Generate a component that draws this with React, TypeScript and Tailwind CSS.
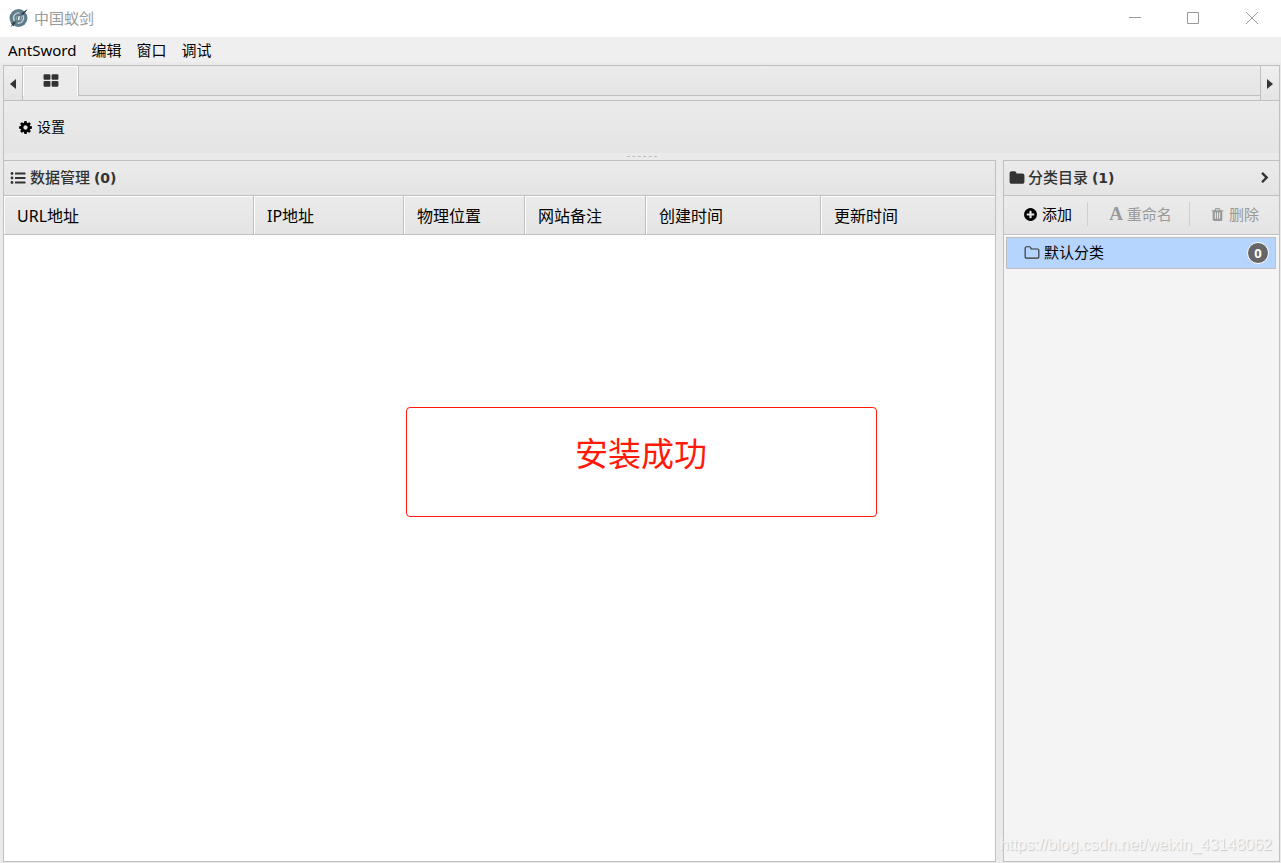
import React from "react";

type IconProps = { className?: string };

function Glyph({ d, className = "" }: { d: string; className?: string }) {
  return (
    <svg viewBox="0 0 1792 1792" fill="currentColor" aria-hidden="true" className={`shrink-0 ${className}`}>
      <path d={d} />
    </svg>
  );
}

const GRID =
  "M832 1024v384q0 52-38 90t-90 38h-512q-52 0-90-38t-38-90v-384q0-52 38-90t90-38h512q52 0 90 38t38 90zm0-768v384q0 52-38 90t-90 38h-512q-52 0-90-38t-38-90v-384q0-52 38-90t90-38h512q52 0 90 38t38 90zm896 768v384q0 52-38 90t-90 38h-512q-52 0-90-38t-38-90v-384q0-52 38-90t90-38h512q52 0 90 38t38 90zm0-768v384q0 52-38 90t-90 38h-512q-52 0-90-38t-38-90v-384q0-52 38-90t90-38h512q52 0 90 38t38 90z";
const COG =
  "M1152 896q0-106-75-181t-181-75-181 75-75 181 75 181 181 75 181-75 75-181zm512-109v222q0 12-8 23t-20 13l-185 28q-19 54-39 91 35 50 107 138 10 12 10 25t-9 23q-27 37-99 108t-94 71q-12 0-26-9l-138-108q-44 23-91 38-16 136-29 186-7 28-36 28h-222q-14 0-24.5-8.5t-11.5-21.5l-28-184q-49-16-90-37l-141 107q-10 9-25 9-14 0-25-11-126-114-165-168-7-10-7-23 0-12 8-23 15-21 51-66.5t54-70.5q-27-50-41-99l-183-27q-13-2-21-12.5t-8-23.5v-222q0-12 8-23t19-13l186-28q14-46 39-92-40-57-107-138-10-12-10-24 0-10 9-23 26-36 98.5-107.5t94.5-71.5q13 0 26 10l138 107q44-23 91-38 16-136 29-186 7-28 36-28h222q14 0 24.5 8.5t11.5 21.5l28 184q49 16 90 37l142-107q9-9 24-9 13 0 25 10 129 119 165 170 7 8 7 22 0 12-8 23-15 21-51 66.5t-54 70.5q26 50 41 98l183 28q13 2 21 12.5t8 23.5z";
const FOLDER_OPEN =
  "M1600 1312v-704q0-40-28-68t-68-28h-704q-40 0-68-28t-28-68v-64q0-40-28-68t-68-28h-320q-40 0-68 28t-28 68v960q0 40 28 68t68 28h1216q40 0 68-28t28-68zm128-704v704q0 92-66 158t-158 66h-1216q-92 0-158-66t-66-158v-960q0-92 66-158t158-66h320q92 0 158 66t66 158v32h672q92 0 158 66t66 158z";
const FOLDER =
  "M1728 608v704q0 92-66 158t-158 66h-1216q-92 0-158-66t-66-158v-960q0-92 66-158t158-66h320q92 0 158 66t66 158v32h672q92 0 158 66t66 158z";
const TRASH =
  "M704 1376v-704q0-14-9-23t-23-9h-64q-14 0-23 9t-9 23v704q0 14 9 23t23 9h64q14 0 23-9t9-23zm256 0v-704q0-14-9-23t-23-9h-64q-14 0-23 9t-9 23v704q0 14 9 23t23 9h64q14 0 23-9t9-23zm256 0v-704q0-14-9-23t-23-9h-64q-14 0-23 9t-9 23v704q0 14 9 23t23 9h64q14 0 23-9t9-23zm-544-992h448l-48-117q-7-9-17-11h-317q-10 2-17 11zm928 32v64q0 14-9 23t-23 9h-96v948q0 83-47 143.5t-113 60.5h-832q-66 0-113-58.5t-47-141.5v-952h-96q-14 0-23-9t-9-23v-64q0-14 9-23t23-9h309l70-167q15-37 54-63t79-26h320q40 0 79 26t54 63l70 167h309q14 0 23 9t9 23z";
const PLUS_CIRCLE =
  "M1344 960v-128q0-26-19-45t-45-19h-256v-256q0-26-19-45t-45-19h-128q-26 0-45 19t-19 45v256h-256q-26 0-45 19t-19 45v128q0 26 19 45t45 19h256v256q0 26 19 45t45 19h128q26 0 45-19t19-45v-256h256q26 0 45-19t19-45zm320-64q0 209-103 385.5t-279.5 279.5-385.5 103-385.5-103-279.5-279.5-103-385.5 103-385.5 279.5-279.5 385.5-103 385.5 103 279.5 279.5 103 385.5z";
const CHEVRON =
  "M1363 877l-742 742q-19 19-45 19t-45-19l-166-166q-19-19-19-45t19-45l531-531-531-531q-19-19-19-45t19-45l166-166q19-19 45-19t45 19l742 742q19 19 19 45t-19 45z";

function ListIcon({ className = "" }: IconProps) {
  return (
    <svg viewBox="0 0 16 16" fill="currentColor" aria-hidden="true" className={`shrink-0 ${className}`}>
      <circle cx="2" cy="3.5" r="1.4" />
      <circle cx="2" cy="8" r="1.4" />
      <circle cx="2" cy="12.5" r="1.4" />
      <rect x="5" y="2.5" width="10.5" height="2" rx="0.3" />
      <rect x="5" y="7" width="10.5" height="2" rx="0.3" />
      <rect x="5" y="11.5" width="10.5" height="2" rx="0.3" />
    </svg>
  );
}

function RenameIcon({ className = "" }: IconProps) {
  return (
    <span aria-hidden="true" className={`shrink-0 font-['Liberation_Serif',serif] font-bold ${className}`}>
      A
    </span>
  );
}

function Logo({ className = "" }: IconProps) {
  return (
    <svg viewBox="0 0 20 20" fill="none" aria-hidden="true" className={`shrink-0 ${className}`}>
      <circle cx="9.5" cy="10" r="9" fill="#607d8b" />
      <path d="M5.6 13.2A5.2 5.2 0 0 1 10.5 4.9M13.6 7.2a5.2 5.2 0 0 1-5 8" stroke="#c3d0d6" strokeWidth="1.3" />
      <path d="M9.3 8.4l1.6-.5-.5 4-1.5.4z" fill="#f4f7f8" />
      <path d="M7.6 12.2a3 3 0 0 1 .5-4M12 8.2a3 3 0 0 1-.4 4" stroke="#a9bac2" strokeWidth=".8" />
      <path d="M1.4 19.2L5 13.6l1.6 1.5zM18.8.8l-6.6 5 1.5 1.4z" fill="#263238" />
      <path d="M3 16.8l4-4M12.5 7.4l5-5.2" stroke="#37474f" strokeWidth="1" />
      <path d="M2.2 15l2.8 2.8" stroke="#263238" strokeWidth="1" />
    </svg>
  );
}

const menus = ["AntSword", "编辑", "窗口", "调试"];
const columns = [
  { label: "URL地址", width: "w-[250px]" },
  { label: "IP地址", width: "w-[150px]" },
  { label: "物理位置", width: "w-[121px]" },
  { label: "网站备注", width: "w-[121px]" },
  { label: "创建时间", width: "w-[175px]" },
  { label: "更新时间", width: "" },
];

const shade = "bg-linear-to-b from-[#ebebeb] to-[#e4e4e4]";

function PanelTitle({ text, count }: { text: string; count: number }) {
  return (
    <h2 className="flex-1 pb-0.5 font-medium">
      {text}{" "}
      <span className="font-['DejaVu_Sans',sans-serif] text-sm font-bold">({count})</span>
    </h2>
  );
}

export default function App() {
  return (
    <div className="relative flex h-screen flex-col overflow-hidden bg-[#eaeaea] font-['Noto_Sans','Noto_Sans_CJK_SC',sans-serif] text-[15px] leading-5 text-black">
      <header className="flex h-[37px] shrink-0 items-center bg-white pb-px text-[#999]">
        <Logo className="ml-[9px] size-5" />
        <h1 className="ml-[5px] flex-1">中国蚁剑</h1>
        <button aria-label="最小化" className="flex h-full w-[58px] items-center justify-center">
          <svg viewBox="0 0 12 12" className="size-3" stroke="currentColor">
            <path d="M0 5.5h12" />
          </svg>
        </button>
        <button aria-label="最大化" className="flex h-full w-[58px] items-center justify-center">
          <svg viewBox="0 0 12 12" className="size-3" stroke="currentColor" fill="none">
            <path d="M.5.5h11v11H.5z" />
          </svg>
        </button>
        <button aria-label="关闭" className="flex h-full w-[59px] items-center justify-center">
          <svg viewBox="0 0 12 12" className="size-3" stroke="currentColor">
            <path d="M0 0l12 12M12 0L0 12" />
          </svg>
        </button>
      </header>

      <nav className="mb-[3px] flex h-[25px] shrink-0 items-center gap-[15px] bg-[#efefef] px-2">
        {menus.map((m) => (
          <button key={m}>{m}</button>
        ))}
      </nav>

      <div className="mr-px ml-[3px] flex h-[35px] shrink-0 border border-b-0 border-[#c0c0c0]">
        <button
          aria-label="向左滚动"
          className="flex w-[19px] items-center justify-center border-r border-[#c0c0c0] bg-linear-to-b from-[#efefef] to-[#e4e4e4] pt-0.5 text-[#333]"
        >
          <svg viewBox="0 0 6 10" className="h-2.5 w-1.5" fill="currentColor">
            <path d="M6 0v10L0 5z" />
          </svg>
        </button>
        <div role="tablist" className="flex h-[30px] flex-1">
          <button
            role="tab"
            aria-selected="true"
            aria-label="主页"
            className="flex w-[55px] items-center justify-center border border-b-0 border-white bg-[#ebebeb] pb-0.5 text-[#333]"
          >
            <Glyph d={GRID} className="size-4" />
          </button>
          <div className={`flex-1 border-b border-l border-[#c0c0c0] ${shade}`} />
        </div>
        <button
          aria-label="向右滚动"
          className="flex w-[19px] items-center justify-center border-l border-[#c0c0c0] bg-linear-to-b from-[#efefef] to-[#e4e4e4] pt-0.5 text-[#333]"
        >
          <svg viewBox="0 0 6 10" className="h-2.5 w-1.5" fill="currentColor">
            <path d="M0 0v10l6-5z" />
          </svg>
        </button>
      </div>

      <div className={`mr-px ml-[3px] flex h-[53px] shrink-0 items-center border-x border-t border-[#c0c0c0] px-3.5 ${shade}`}>
        <button className="flex items-center gap-1 text-sm">
          <Glyph d={COG} className="size-[15px]" />
          设置
        </button>
      </div>

      <div className="mr-px ml-[3px] flex h-[7px] shrink-0 items-center justify-center border-x border-[#c0c0c0]">
        <span className="w-[30px] border-t border-dashed border-[#bdbdbd]" />
      </div>

      <main className="mr-px mb-px ml-[3px] flex min-h-0 flex-1 gap-[7px]">
        <section className="flex min-w-0 flex-1 flex-col border border-[#c0c0c0] bg-white">
          <div className={`flex h-[35px] shrink-0 items-center gap-1 border-b border-[#c0c0c0] px-1.5 text-[#333] ${shade}`}>
            <ListIcon className="size-4" />
            <PanelTitle text="数据管理" count={0} />
          </div>
          <table className="w-full table-fixed border-separate border-spacing-0 text-base">
            <thead>
              <tr>
                {columns.map((c) => (
                  <th
                    key={c.label}
                    className={`h-[39px] border-r border-b border-r-[#c0c0c0] border-b-[#c0c0c0] px-[13px] pt-0.5 text-left font-normal shadow-[inset_1px_1px_0_#fff] last:border-r-0 ${shade} ${c.width}`}
                  >
                    {c.label}
                  </th>
                ))}
              </tr>
            </thead>
          </table>
        </section>

        <aside className="flex w-[277px] shrink-0 flex-col border border-[#c0c0c0] bg-[#f4f4f4]">
          <div className={`flex h-[35px] shrink-0 items-center gap-[3px] border-b border-[#c0c0c0] pr-2 pl-[5px] text-[#333] ${shade}`}>
            <Glyph d={FOLDER} className="size-4" />
            <PanelTitle text="分类目录" count={1} />
            <button aria-label="折叠">
              <Glyph d={CHEVRON} className="size-3" />
            </button>
          </div>
          <div className={`flex h-[39px] shrink-0 items-center border-b border-[#c0c0c0] pb-0.5 ${shade}`}>
            <button className="flex h-6 w-[84px] items-center justify-center gap-1 border-r border-[#c9d1d7] pl-1">
              <Glyph d={PLUS_CIRCLE} className="size-[15px]" />
              添加
            </button>
            <button disabled className="flex h-6 w-[102px] items-center justify-center gap-1 border-r border-[#c9d1d7] pl-1 text-[#999]">
              <RenameIcon className="text-[19px]" />
              重命名
            </button>
            <button disabled className="flex h-6 flex-1 items-center justify-center gap-1 text-[#999]">
              <Glyph d={TRASH} className="size-[15px]" />
              删除
            </button>
          </div>
          <ul className="border-t border-white pt-px pr-[3px] pl-0.5">
            <li>
              <button className="flex h-8 w-full items-center border border-[#c0c0c0] bg-[#b5d5ff] pr-1.5 pl-[17px]">
                <Glyph d={FOLDER_OPEN} className="size-4 text-[#333]" />
                <span className="ml-1 flex-1 pb-0.5 text-left">默认分类</span>
                <span className="flex size-[22px] items-center justify-center rounded-full border border-white bg-[#666] pb-px text-[13px] font-bold text-white">
                  0
                </span>
              </button>
            </li>
          </ul>
        </aside>
      </main>

      <div className="absolute inset-x-0 top-[407px] flex justify-center pl-px">
        <div className="h-[110px] w-[471px] rounded border border-[#ff1a0a] pt-[22px] text-center text-[33px] leading-[48px] text-[#ff1a0a]">
          安装成功
        </div>
      </div>
      <div className="absolute right-[9px] bottom-1.5 font-['Liberation_Sans',sans-serif] text-base text-[#f7f7f7] [text-shadow:1px_1px_1px_#c8c8c8]">
        https://blog.csdn.net/weixin_43148062
      </div>
    </div>
  );
}
